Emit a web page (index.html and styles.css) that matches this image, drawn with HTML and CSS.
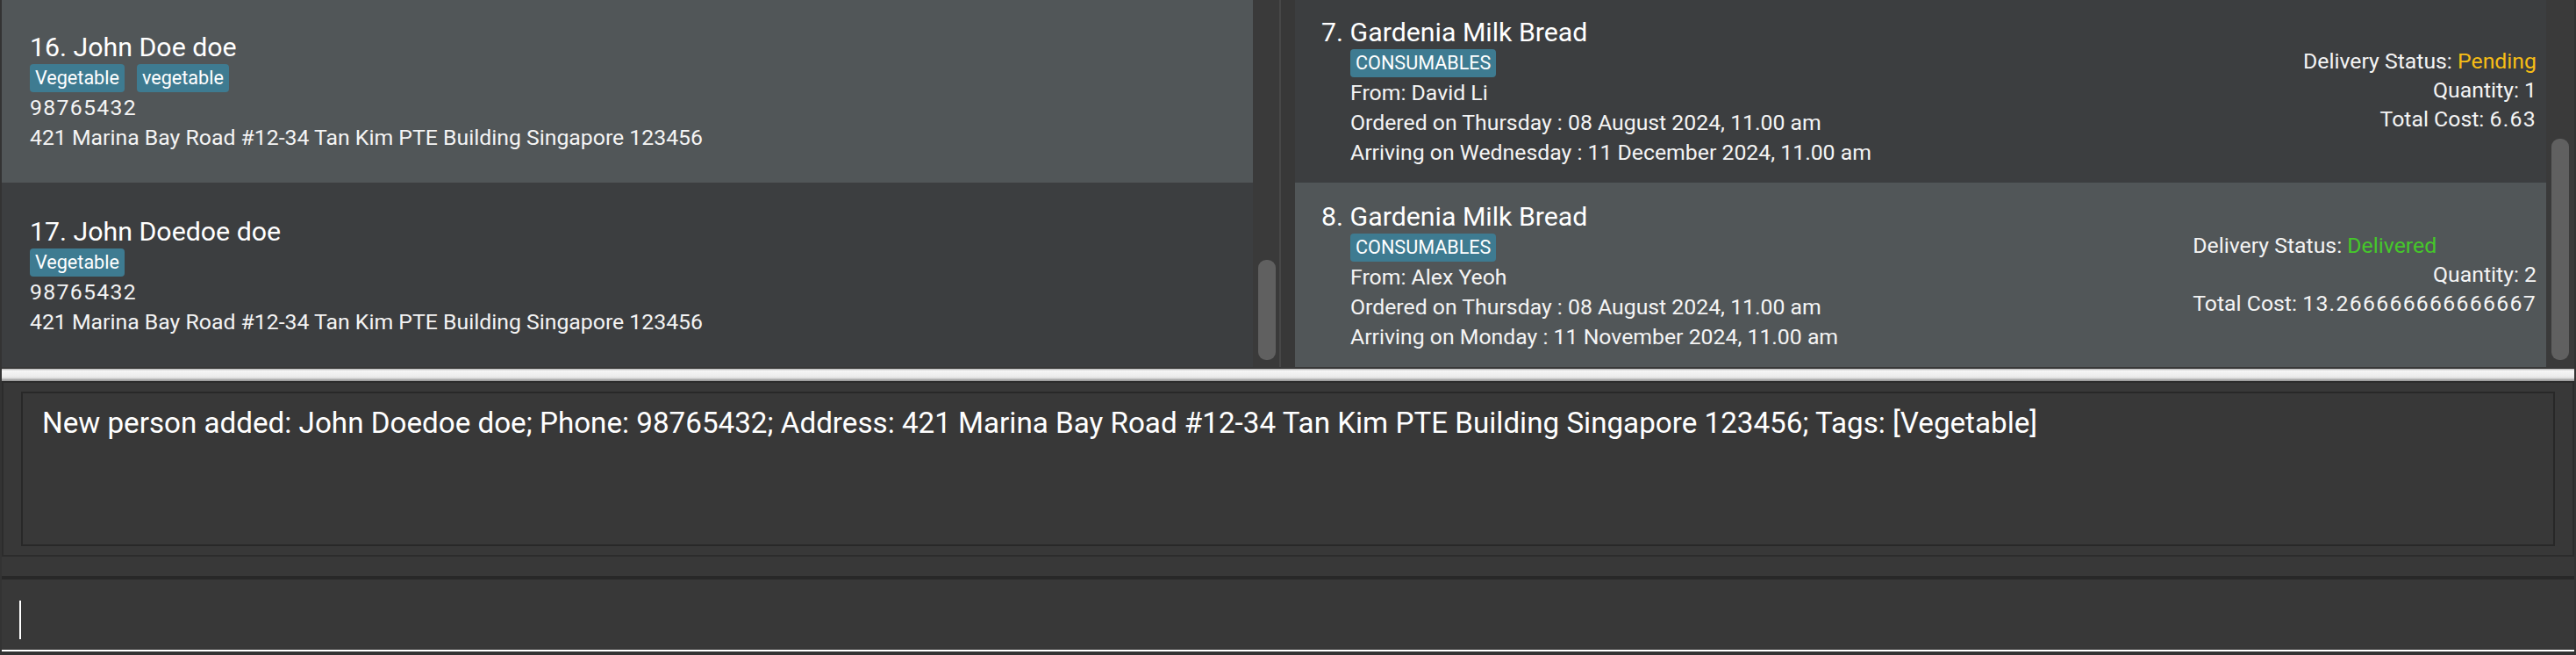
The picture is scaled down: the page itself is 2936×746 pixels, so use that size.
FILE: index.html
```html
<!DOCTYPE html>
<html lang="en">
<head>
<meta charset="utf-8">
<title>Address Book</title>
<link rel="stylesheet" href="styles.css">
</head>
<body>
<div class="app">
  <div class="lists">
    <div class="pane pane-left">
      <div class="list">
        <div class="cell cell-light cell-first person">
          <div class="title">16. John Doe doe</div>
          <div class="tags"><span class="tag">Vegetable</span><span class="tag">vegetable</span></div>
          <div class="line"><span class="num">98765432</span></div>
          <div class="line">421 Marina Bay Road #12-34 Tan Kim PTE Building Singapore 123456</div>
        </div>
        <div class="cell cell-dark person">
          <div class="title">17. John Doedoe doe</div>
          <div class="tags"><span class="tag">Vegetable</span></div>
          <div class="line"><span class="num">98765432</span></div>
          <div class="line">421 Marina Bay Road #12-34 Tan Kim PTE Building Singapore 123456</div>
        </div>
      </div>
      <div class="vscroll"><div class="thumb thumb-left"></div></div>
    </div>
    <div class="divider"></div>
    <div class="pane pane-right">
      <div class="list">
        <div class="cell cell-dark cell-first order">
          <div class="title">7. Gardenia Milk Bread</div>
          <div class="order-body">
            <div class="order-left">
              <div class="tags"><span class="tag">CONSUMABLES</span></div>
              <div class="line">From: David Li</div>
              <div class="line">Ordered on Thursday : 08 August 2024, 11.00 am</div>
              <div class="line">Arriving on Wednesday : 11 December 2024, 11.00 am</div>
            </div>
            <div class="order-right">
              <div class="rline status">Delivery Status:&nbsp;<span class="pending">Pending</span></div>
              <div class="rline">Quantity: 1</div>
              <div class="rline">Total Cost: <span class="num">6.63</span></div>
            </div>
          </div>
        </div>
        <div class="cell cell-light order">
          <div class="title">8. Gardenia Milk Bread</div>
          <div class="order-body">
            <div class="order-left">
              <div class="tags"><span class="tag">CONSUMABLES</span></div>
              <div class="line">From: Alex Yeoh</div>
              <div class="line">Ordered on Thursday : 08 August 2024, 11.00 am</div>
              <div class="line">Arriving on Monday : 11 November 2024, 11.00 am</div>
            </div>
            <div class="order-right">
              <div class="rline status">Delivery Status:&nbsp;<span class="delivered">Delivered</span></div>
              <div class="rline">Quantity: 2</div>
              <div class="rline">Total Cost: <span class="num">13.266666666666667</span></div>
            </div>
          </div>
        </div>
      </div>
      <div class="vscroll"><div class="thumb thumb-right"></div></div>
    </div>
  </div>
  <div class="splitter"></div>
  <div class="result-outer">
    <div class="result-inner">New person added: John Doedoe doe; Phone: 98765432; Address: 421 Marina Bay Road #12-34 Tan Kim PTE Building Singapore 123456; Tags: [Vegetable]</div>
  </div>
  <div class="gap"></div>
  <div class="command"><span class="caret"></span></div>
  <div class="bottom-line"></div>
</div>
</body>
</html>
```
FILE: styles.css
```css
* { box-sizing: border-box; }
html, body { margin: 0; padding: 0; }
body {
  background: #333333;
  font-family: Roboto, "Liberation Sans", sans-serif;
  color: #ffffff;
  width: 2936px;
  height: 746px;
  overflow: hidden;
}
.app { padding: 0 2px; }
.lists {
  display: flex;
  height: 420px;
  padding-bottom: 2px;
  background: #383838;
}
.pane { display: flex; height: 418px; }
.pane-left { width: 1456px; }
.pane-right { flex: 1; }
.list {
  width: 1426px;
  height: 418px;
  overflow: hidden;
  display: flex;
  flex-direction: column;
}
.cell { height: 210px; flex: none; }
.cell-first { margin-top: -2px; }
.cell-light { background: #515658; }
.cell-dark { background: #3c3e40; }
.vscroll {
  flex: 1;
  background: #3a3a3a;
  padding-left: 6px;
}
.thumb {
  width: 20px;
  background: #606060;
  border-radius: 9px;
}
.thumb-left { margin-top: 296px; height: 114px; }
.thumb-right { margin-top: 158px; height: 252px; }
.divider {
  width: 18px;
  background: #383838;
  border-left: 2px solid #474747;
}
.title {
  font-size: 30.3px;
  line-height: 36px;
  white-space: nowrap;
}
.line {
  font-size: 24.8px;
  line-height: 34px;
  white-space: nowrap;
  color: #f4f4f4;
}
.num { letter-spacing: 1.3px; }
.tags { display: flex; gap: 14px; height: 33px; }
.tag {
  background: #3e7b91;
  border-radius: 4px;
  height: 32px;
  line-height: 32px;
  font-size: 21.6px;
  padding: 0 6px;
  color: #ffffff;
}
.person { padding: 38px 0 0 32px; }
.person .tags { margin-top: 1px; }
.order { padding: 21px 11px 0 30px; }
.order .tags { margin-top: 1px; }
.order-body { display: flex; padding-left: 33px; }
.order-left { flex: 1; }
.order-right {
  display: flex;
  flex-direction: column;
  align-items: flex-end;
  margin-top: -2px;
}
.rline {
  font-size: 24.8px;
  line-height: 33px;
  white-space: nowrap;
  color: #f4f4f4;
}
.status { align-self: stretch; }
.pending { color: #f6bd16; }
.delivered { color: #45c82a; }
.splitter {
  height: 14px;
  background: linear-gradient(#c4c4c4 0, #c4c4c4 1px, #f6f6f6 2px, #ececec 9px, #d8d8d8 11px, #b0b0b0 12px, #9a9a9a 14px);
}
.result-outer {
  height: 200px;
  background: #383838;
  border: 2px solid #2c2c2c;
  padding: 10px 20px;
}
.result-inner {
  height: 176px;
  border: 2px solid #282828;
  padding: 15px 22px;
  font-size: 33.2px;
  line-height: 38px;
  white-space: nowrap;
}
.gap { height: 22px; background: #383838; }
.command {
  height: 84px;
  background: #383838;
  border-top: 4px solid #282828;
  padding: 24px 0 0 20px;
}
.caret {
  display: block;
  width: 2px;
  height: 44px;
  background: #ffffff;
}
.bottom-line { height: 2px; background: #ffffff; }
```
